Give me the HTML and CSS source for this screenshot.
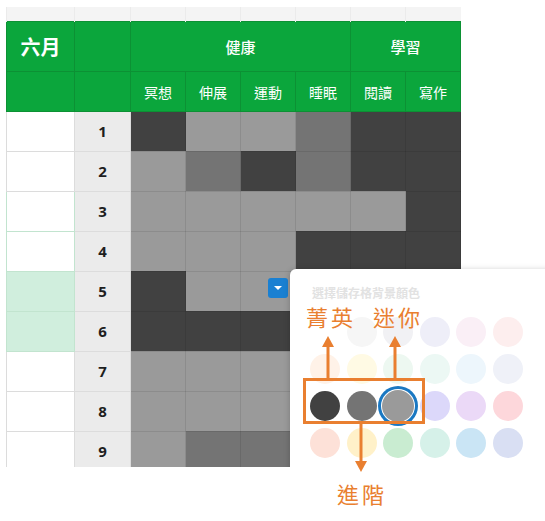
FILE: index.html
```html
<!DOCTYPE html>
<html lang="zh-Hant">

<head>
    <meta charset="UTF-8">
    <meta name="viewport" content="width=device-width, initial-scale=1.0">
    <title>六月習慣表</title>
    <link rel="stylesheet" href="styles.css">
</head>

<body>
    <div class="page">
        <div class="sheet">
            <table class="grid">
                <colgroup>
                    <col class="c-note">
                    <col class="c-day">
                    <col class="c-cell"><col class="c-cell"><col class="c-cell">
                    <col class="c-cell"><col class="c-cell"><col class="c-cell">
                </colgroup>
                <tr class="letters">
                    <td></td><td></td><td></td><td></td><td></td><td></td><td></td><td></td>
                </tr>
                <tr class="head1">
                    <th class="month">六月</th>
                    <th></th>
                    <th colspan="4">健康</th>
                    <th colspan="2">學習</th>
                </tr>
                <tr class="head2">
                    <th></th>
                    <th></th>
                    <th>冥想</th><th>伸展</th><th>運動</th><th>睡眠</th><th>閱讀</th><th>寫作</th>
                </tr>
                <tr>
                    <td class="note"></td><td class="day">1</td>
                    <td class="d"></td><td class="l"></td><td class="l"></td><td class="m"></td><td class="d"></td><td class="d"></td>
                </tr>
                <tr>
                    <td class="note"></td><td class="day">2</td>
                    <td class="l"></td><td class="m"></td><td class="d"></td><td class="m"></td><td class="d"></td><td class="d"></td>
                </tr>
                <tr class="sel">
                    <td class="note"></td><td class="day">3</td>
                    <td class="l"></td><td class="l"></td><td class="l"></td><td class="l"></td><td class="l"></td><td class="d"></td>
                </tr>
                <tr class="sel">
                    <td class="note"></td><td class="day">4</td>
                    <td class="l"></td><td class="l"></td><td class="l"></td><td class="d"></td><td class="d"></td><td class="d"></td>
                </tr>
                <tr class="sel">
                    <td class="note on"></td><td class="day">5</td>
                    <td class="d"></td><td class="l"></td>
                    <td class="l has-btn"><span class="drop"></span></td>
                    <td class="d"></td><td class="d"></td><td class="d"></td>
                </tr>
                <tr class="sel">
                    <td class="note on"></td><td class="day">6</td>
                    <td class="d"></td><td class="d"></td><td class="d"></td><td class="d"></td><td class="d"></td><td class="d"></td>
                </tr>
                <tr>
                    <td class="note"></td><td class="day">7</td>
                    <td class="l"></td><td class="l"></td><td class="l"></td><td class="l"></td><td class="l"></td><td class="l"></td>
                </tr>
                <tr>
                    <td class="note"></td><td class="day">8</td>
                    <td class="l"></td><td class="l"></td><td class="l"></td><td class="l"></td><td class="l"></td><td class="l"></td>
                </tr>
                <tr>
                    <td class="note"></td><td class="day">9</td>
                    <td class="l"></td><td class="m"></td><td class="m"></td><td class="m"></td><td class="m"></td><td class="m"></td>
                </tr>
            </table>

            <!-- 顏色選單 -->
            <div class="picker">
                <p class="picker-title">選擇儲存格背景顏色</p>
                <div class="swatches">
                    <i style="background:#ffffff"></i>
                    <i style="background:#f6f6f6"></i>
                    <i style="background:#f1f1f4"></i>
                    <i style="background:#eeeef8"></i>
                    <i style="background:#faeff6"></i>
                    <i style="background:#fdeeee"></i>

                    <i style="background:#fff2e8"></i>
                    <i style="background:#fffae4"></i>
                    <i style="background:#edf8f1"></i>
                    <i style="background:#ecf8f4"></i>
                    <i style="background:#edf6fc"></i>
                    <i style="background:#eff1f8"></i>

                    <i class="strong" style="background:#414141"></i>
                    <i class="strong" style="background:#747474"></i>
                    <i class="strong picked" style="background:#9a9a9a"></i>
                    <i style="background:#dcd8fa"></i>
                    <i style="background:#ebd9f7"></i>
                    <i style="background:#fdd7db"></i>

                    <i style="background:#fde1d8"></i>
                    <i style="background:#fff1c9"></i>
                    <i style="background:#c9ecd1"></i>
                    <i style="background:#d6f1e9"></i>
                    <i style="background:#cae5f5"></i>
                    <i style="background:#d9dff3"></i>
                </div>
            </div>
        </div>

        <!-- 標註 -->
        <svg class="marks" width="545" height="521" viewBox="0 0 545 521">
            <rect x="304.5" y="379.5" width="119" height="43" fill="none" stroke="#e97f30" stroke-width="3" />
            <line x1="328" y1="378" x2="328" y2="346" stroke="#e97f30" stroke-width="3" />
            <polygon points="322,347 334,347 328,336" fill="#e97f30" />
            <line x1="395" y1="378" x2="395" y2="346" stroke="#e97f30" stroke-width="3" />
            <polygon points="389,347 401,347 395,336" fill="#e97f30" />
            <line x1="361" y1="424" x2="361" y2="462" stroke="#e97f30" stroke-width="3" />
            <polygon points="355,461 367,461 361,472" fill="#e97f30" />
        </svg>
        <span class="tag tag-elite">菁英</span>
        <span class="tag tag-mini">迷你</span>
        <span class="tag tag-adv">進階</span>
    </div>
</body>

</html>
```

FILE: styles.css
```css
* {
    margin: 0;
    padding: 0;
    box-sizing: border-box;
}

body {
    font-family: "Noto Sans CJK TC", "Noto Sans", sans-serif;
    background: #fff;
    overflow: hidden;
}

i {
    font-style: normal;
}

.page {
    position: relative;
    width: 545px;
    height: 521px;
    padding: 7px 0 0 6px;
}

.sheet {
    position: relative;
    height: 460px;
    overflow: hidden;
}

.grid {
    border-collapse: collapse;
    table-layout: fixed;
    width: 454px;
}

.c-note {
    width: 68px;
}

.c-day {
    width: 56px;
}

.c-cell {
    width: 55px;
}

.grid td {
    height: 40px;
}

.grid .letters td {
    height: 14px;
    background: #f4f4f4;
    border-left: 1px solid #ebebeb;
}

.head1 th,
.head2 th {
    background: #0ba63c;
    color: #fff;
    border: 1px solid #0c9134;
    text-align: center;
}

.head1 th {
    height: 50px;
    font-size: 15px;
    font-weight: 500;
}

.head1 .month {
    font-size: 20px;
    font-weight: 700;
}

.head2 th {
    height: 40px;
    font-size: 14px;
    font-weight: 400;
    padding-top: 2px;
}

.note {
    background: #fff;
    border: 1px solid #dcdcdc;
}

.sel .note {
    border-color: #c2e4cf;
}

.note.on {
    background: #d0eedd;
}

.day {
    background: #ebebeb;
    border: 1px solid #dcdcdc;
    text-align: center;
    font-family: "Open Sans", "Liberation Sans", sans-serif;
    font-weight: 700;
    font-size: 15px;
    color: #1e1e1e;
}

.sel .day {
    border-left-color: #c2e4cf;
}

.d,
.m,
.l {
    border: 1px solid rgba(0, 0, 0, 0.09);
}

.d {
    background: #414141;
}

.m {
    background: #747474;
}

.l {
    background: #9a9a9a;
}

.grid .has-btn {
    vertical-align: top;
    text-align: right;
    padding: 6px 7px 0 0;
    line-height: 0;
}

.drop {
    display: inline-block;
    position: relative;
    width: 20px;
    height: 20px;
    border-radius: 3px;
    background: #1a80d2;
}

.drop:after {
    content: "";
    position: absolute;
    left: 6px;
    top: 8px;
    border-left: 4px solid transparent;
    border-right: 4px solid transparent;
    border-top: 4px solid #fff;
}

.picker {
    position: absolute;
    left: 284px;
    top: 262px;
    width: 270px;
    height: 240px;
    background: #fff;
    border-radius: 6px;
    box-shadow: 0 1px 6px rgba(0, 0, 0, 0.22);
    padding: 17px 0 0 20px;
}

.picker-title {
    font-size: 12px;
    line-height: 14px;
    font-weight: 700;
    color: #e2e2e2;
    margin-bottom: 17px;
    padding-left: 2px;
}

.swatches {
    display: grid;
    grid-template-columns: repeat(6, 30px);
    column-gap: 6.5px;
    row-gap: 7px;
}

.swatches i {
    display: block;
    width: 30px;
    height: 30px;
    border-radius: 50%;
}

.swatches .picked {
    width: 32px;
    height: 32px;
    margin: -1px;
    box-shadow: 0 0 0 1px #fff, 0 0 0 4px #1a78c2;
}

.marks {
    position: absolute;
    left: 0;
    top: 0;
    pointer-events: none;
}

.tag {
    position: absolute;
    font-size: 22px;
    line-height: 22px;
    letter-spacing: 3px;
    color: #e97f30;
    font-weight: 400;
}

.tag-elite {
    left: 306px;
    top: 305px;
}

.tag-mini {
    left: 373px;
    top: 305px;
}

.tag-adv {
    left: 337px;
    top: 482px;
}
```
